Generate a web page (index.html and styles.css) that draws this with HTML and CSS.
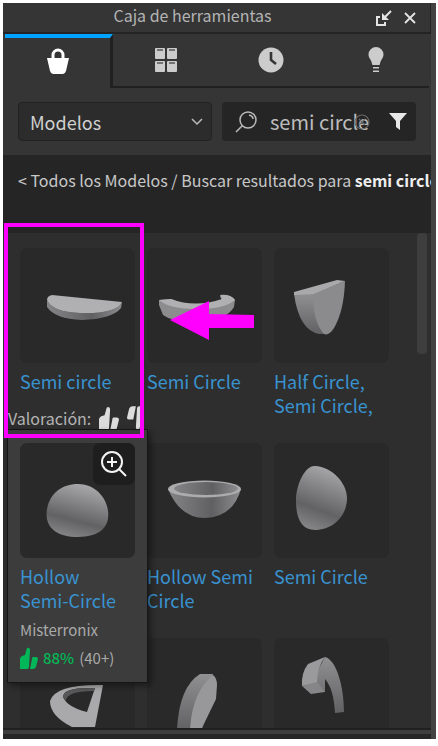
FILE: index.html
```
<!DOCTYPE html>
<html lang="es">
<head>
    <meta charset="UTF-8">
    <meta name="viewport" content="width=device-width, initial-scale=1.0">
    <title>Caja de herramientas</title>
    <link rel="stylesheet" href="styles.css">
</head>
<body>
    <div class="window">
        <div class="panel">
            <header class="titlebar">
                <h1>Caja de herramientas</h1>
                <div class="window-controls">
                    <button class="icon-btn" aria-label="Acoplar">
                        <svg width="16" height="16" viewBox="0 0 16 16" fill="none" stroke="#e4e4e4" stroke-width="2"><path d="M4 7H1v8h8v-3"/><path d="M15 1L8 8" /><path d="M6 3v7h7z" fill="#e4e4e4" stroke="none"/></svg>
                    </button>
                    <button class="icon-btn" aria-label="Cerrar">
                        <svg width="12" height="12" viewBox="0 0 12 12" fill="none" stroke="#e4e4e4" stroke-width="1.8"><path d="M1 1l10 10M11 1L1 11"/></svg>
                    </button>
                </div>
            </header>

            <nav class="tabs">
                <button class="tab active" aria-label="Mercado">
                    <svg width="24" height="26" viewBox="0 0 24 26"><path d="M7 12V7a5 5 0 0 1 10 0v5" fill="none" stroke="#fff" stroke-width="3"/><path d="M1 10h22l-3 13q-1 3-3 3H7q-2 0-3-3z" fill="#fff"/></svg>
                </button>
                <button class="tab" aria-label="Inventario">
                    <svg width="22" height="26" viewBox="0 0 22 26" fill="#ccc"><rect y="1" width="10" height="11" rx="1"/><rect x="12" y="1" width="10" height="11" rx="1"/><rect y="14" width="10" height="11" rx="1"/><rect x="12" y="14" width="10" height="11" rx="1"/><path d="M2 3h6M14 3h6M2 16h6M14 16h6" stroke="#555" stroke-width="1.4"/></svg>
                </button>
                <button class="tab" aria-label="Recientes">
                    <svg width="26" height="26" viewBox="0 0 26 26"><circle cx="13" cy="13" r="12.5" fill="#ccc"/><path d="M13 5v8l5 4" fill="none" stroke="#353535" stroke-width="2.6"/></svg>
                </button>
                <button class="tab" aria-label="Creaciones">
                    <svg width="16" height="26" viewBox="0 0 16 26" fill="#ccc"><path d="M8 0a7.500 7.500 0 0 1 7.500 7.500c0 4-3 5-3.500 9.500q0 1-1 1H5q-1 0-1-1C3.500 12.500.5 11.500.5 7.500A7.500 7.500 0 0 1 8 0z"/><path d="M5 20h6v1.600H5zM5 23.400h6V25H5z"/></svg>
                </button>
            </nav>

            <form class="search-row">
                <div class="select-wrap">
                    <select class="category" aria-label="Categoría">
                        <option>Modelos</option>
                    </select>
                    <svg class="chevron" width="12" height="8" viewBox="0 0 12 8" fill="none" stroke="#bbb" stroke-width="1.5"><path d="M1 1l5 5 5-5"/></svg>
                </div>
                <div class="search-box">
                    <svg width="22" height="22" viewBox="0 0 22 22" fill="none" stroke="#bbb" stroke-width="1.5"><circle cx="13" cy="9" r="8"/><path d="M7.500 14.500L1 21M14 4q4 1 4 4"/></svg>
                    <div class="query-wrap">
                        <input class="query" type="text" value="semi circle" aria-label="Buscar">
                        <button class="clear" type="button" aria-label="Borrar">
                            <svg width="16" height="16" viewBox="0 0 16 16" fill="none" stroke="#6a6a6a" stroke-width="1.2"><circle cx="8" cy="8" r="7"/><path d="M5 5l6 6M11 5l-6 6"/></svg>
                        </button>
                    </div>
                    <button class="icon-btn" type="button" aria-label="Filtrar">
                        <svg width="18" height="17" viewBox="0 0 18 17" fill="#e8e8e8"><path d="M0 0h18l-7 8v9l-4-3V8z"/></svg>
                    </button>
                </div>
            </form>

            <p class="breadcrumb"><a href="#">&lt; Todos los Modelos</a> / Buscar resultados para <strong>semi circle</strong></p>

            <main class="results">
                <svg class="defs" width="0" height="0" aria-hidden="true">
                    <defs>
                        <linearGradient id="shade" x1="0.7" y1="0" x2="0.4" y2="1"><stop offset="0" stop-color="#acacae"/><stop offset="0.7" stop-color="#626264"/><stop offset="1" stop-color="#838385"/></linearGradient>
                        <linearGradient id="side" x1="0" x2="1"><stop offset="0" stop-color="#858587"/><stop offset="0.6" stop-color="#606062"/><stop offset="1" stop-color="#8d8d8f"/></linearGradient>
                        <linearGradient id="drop" x1="0" y1="0" x2="0" y2="1"><stop offset="0" stop-color="#909092"/><stop offset="1" stop-color="#616163"/></linearGradient>
                        <symbol id="thumb" viewBox="0 0 18 22"><path d="M0 22V12q0-2 2-3l3-1 2-7q3-1 3 2L9 20q0 2-2 2z"/><path d="M13 10h3q2 0 2 2l-2 8q-1 2-3 2h-3l2-10q0-2 1-2z"/></symbol>
                    </defs>
                </svg>

                <ul class="grid">
                    <li class="card">
                        <div class="thumbnail"><svg viewBox="0 0 115 115"><path fill="url(#side)" d="M27 52q5 12 33 13 37 1 42-11l-1 6Q92 71 62 72 35 71 27 59z"/><path fill="#b0b0b2" d="M32 47q-5 1-5 5 5 12 33 13 37 1 42-11z"/></svg></div>
                        <a class="name" href="#">Semi circle</a>
                    </li>
                    <li class="card">
                        <div class="thumbnail"><svg viewBox="0 0 115 115"><path fill="#8c8c8e" d="M12 52l12-1q24 11 51 2l-2-5q11-2 15 4l-1 7Q80 72 50 73q-25 1-34-6l-4-10z"/><path fill="#b0b0b2" d="M12 52l12-1q24 9 51 0l-2-4q11-1 15 5-10 9-38 9-28 0-38-9z"/></svg></div>
                        <a class="name" href="#">Semi Circle</a>
                    </li>
                    <li class="card">
                        <div class="thumbnail"><svg viewBox="0 0 115 115"><path fill="url(#drop)" d="M20 46h20q0 26 11 40h-6Q25 82 20 46z"/><path fill="#8b8b8d" d="M39 46l32-13q-1 30-11 47-5 8-10 6-11-12-11-40z"/><path fill="#a9a9ab" d="M20 44l43-12 8 1-31 13-20 1z"/></svg></div>
                        <a class="name" href="#">Half Circle, Semi Circle,</a>
                    </li>
                    <li class="card">
                        <article class="popup">
                            <div class="thumbnail">
                                <svg viewBox="0 0 115 115"><path fill="url(#shade)" d="M27 66c3-16 15-25 31-25s28 12 30 27c2 16-8 26-30 26S24 84 27 66z"/></svg>
                                <button class="preview" aria-label="Ampliar">
                                    <svg width="28" height="28" viewBox="0 0 28 28" fill="none" stroke="#f4f4f4" stroke-width="2"><circle cx="12" cy="12" r="10"/><path d="M12 7v10M7 12h10M19 19l7 7"/></svg>
                                </button>
                            </div>
                            <a class="name" href="#">Hollow Semi-Circle</a>
                            <p class="author">Misterronix</p>
                            <p class="rating"><svg width="18" height="22"><use href="#thumb"/></svg><span class="score">88%</span><span>(40+)</span></p>
                        </article>
                    </li>
                    <li class="card">
                        <div class="thumbnail"><svg viewBox="0 0 115 115"><path fill="url(#side)" d="M21 46q12 29 37 29 28-1 36-29z"/><ellipse cx="57.500" cy="46" rx="36.500" ry="8.500" fill="#acacae"/><ellipse cx="59" cy="45.500" rx="32" ry="6.500" fill="url(#side)"/></svg></div>
                        <a class="name" href="#">Hollow Semi Circle</a>
                    </li>
                    <li class="card">
                        <div class="thumbnail"><svg viewBox="0 0 115 115"><path fill="url(#shade)" d="M41 23c17 1 32 17 32 32 0 19-15 32-32 32-13 0-19-11-19-29s10-36 19-35z"/></svg></div>
                        <a class="name" href="#">Semi Circle</a>
                    </li>
                    <li class="card">
                        <div class="thumbnail"><svg viewBox="0 0 115 115"><path fill="#a9a9ab" fill-rule="evenodd" d="M83 47l-8 42H52Q30 78 30 63q5-17 53-16zm-8 3q-32-1-32 9 4 10 24 15z"/><path fill="#58585a" d="M75 50q-32-1-32 9l3 4q0-10 28-10z"/></svg></div>
                    </li>
                    <li class="card">
                        <div class="thumbnail"><svg viewBox="0 0 115 115"><path fill="url(#drop)" d="M30 92q2-43 23-56h13L55 92z"/><path fill="#98989a" d="M43 92q2-38 23-55 4 3 4 10l-1 14-15 31z"/></svg></div>
                    </li>
                    <li class="card">
                        <div class="thumbnail"><svg viewBox="0 0 115 115"><path fill="url(#drop)" d="M51 19c12 3 19 31 19 55l-9 1c-1-17-4-27-10-34v13h-8V34z"/><path fill="#9a9a9c" d="M28 48q-1-13 6-22l17-7q-8 10-8 26z"/><path fill="#868688" d="M28 48l15-4 8 10-14 2z"/></svg></div>
                    </li>
                </ul>

                <div class="scrollbar"></div>

                <div class="tooltip">
                    <span>Valoración:</span>
                    <svg class="thumb-up" width="20" height="25"><use href="#thumb"/></svg>
                    <svg class="thumb-down" width="20" height="25"><use href="#thumb"/></svg>
                </div>
            </main>

            <!-- marks the first result -->
            <div class="highlight"></div>
            <svg class="arrow" width="84" height="40" viewBox="0 0 84 40"><path fill="#f0f" d="M0 20L39 1v13l45 1v13H39v12z"/></svg>

            <footer class="dock"></footer>
        </div>
    </div>
</body>
</html>
```
FILE: styles.css
```
* {
    margin: 0;
    padding: 0;
    box-sizing: border-box;
}

body {
    font-family: "Noto Sans CJK SC", "Noto Sans", sans-serif;
    background: #fff;
    color: #c8c8c8;
    height: 100vh;
    padding: 3px 2px 7px 3px;
}

button,
input,
select {
    font: inherit;
    color: inherit;
    background: none;
    border: none;
    outline: none;
}

button {
    cursor: pointer;
}

svg {
    display: block;
}

a {
    color: inherit;
    text-decoration: none;
}

.window {
    height: 100%;
    background: #434343;
    padding-right: 5px;
}

.panel {
    position: relative;
    display: flex;
    flex-direction: column;
    height: 100%;
    background: #353535;
}

.titlebar {
    display: flex;
    align-items: center;
    justify-content: center;
    height: 31px;
    padding-bottom: 4px;
    border-bottom: 2px solid #242424;
    border-right: 1px solid #242424;
}

.titlebar h1 {
    flex: 1;
    padding: 0 0 2px 6px;
    font-size: 16px;
    font-weight: normal;
    line-height: 24px;
    text-align: center;
    color: #b4b4b4;
}

.window-controls {
    display: flex;
    align-items: center;
    gap: 12px;
    padding: 4px 14px 0 0;
}

.tabs {
    display: flex;
    height: 54px;
    padding: 0 2px;
}

.tab {
    display: flex;
    flex: 1;
    align-items: center;
    justify-content: center;
    border-bottom: 2px solid #202020;
}

.tab.active {
    border-top: 4px solid #00a2ff;
    border-right: 3px solid #202020;
    border-bottom: none;
    padding-bottom: 4px;
}

.search-row {
    display: grid;
    grid-template-columns: 1fr 1fr;
    gap: 10px;
    padding: 14px 15px;
}

.select-wrap {
    position: relative;
}

.category {
    appearance: none;
    width: 100%;
    height: 39px;
    padding-left: 11px;
    border: 1px solid #222;
    border-radius: 4px;
    background: #2c2c2c;
    font-size: 18px;
    color: #d0d0d0;
}

.chevron {
    position: absolute;
    top: 16px;
    right: 9px;
    pointer-events: none;
}

.search-box {
    display: flex;
    align-items: center;
    gap: 13px;
    min-width: 0;
    height: 39px;
    padding: 0 9px 0 13px;
    border-radius: 4px;
    background: #252525;
}

.search-box > svg,
.icon-btn {
    flex: none;
}

.query-wrap {
    position: relative;
    flex: 1;
    min-width: 0;
}

.query {
    width: 100%;
    height: 37px;
    font-size: 20px;
    color: #bcbcbc;
}

.clear {
    position: absolute;
    top: 11px;
    right: 6px;
}

.breadcrumb {
    height: 78px;
    padding: 13px 0 0 15px;
    overflow: hidden;
    background: #252525;
    font-size: 16px;
    line-height: 24px;
    white-space: nowrap;
}

.breadcrumb strong {
    color: #eee;
}

.results {
    position: relative;
    flex: 1;
    min-height: 0;
    overflow: hidden;
    background: #2e2e2e;
}

.defs {
    position: absolute;
}

.grid {
    display: grid;
    grid-template-columns: repeat(auto-fill, 115px);
    grid-auto-rows: 195px;
    column-gap: 12px;
    padding: 15px 30px 0 17px;
    list-style: none;
}

.card {
    position: relative;
}

.thumbnail {
    position: relative;
    height: 115px;
    margin-bottom: 6px;
    border-radius: 7px;
    background: #292929;
}

.name {
    display: block;
    padding-right: 6px;
    font-size: 18px;
    line-height: 24px;
    color: #3993d0;
}

.popup {
    position: absolute;
    top: -14px;
    left: -13px;
    z-index: 2;
    width: 141px;
    padding: 13px 12px 12px;
    border: 1px solid #161616;
    background: #3c3c3c;
    box-shadow: 3px 3px 6px #0006;
}

.preview {
    position: absolute;
    top: 0;
    right: 0;
    padding: 7px;
    border-radius: 7px;
    background: #1e1e1e;
}

.author {
    padding-top: 6px;
    font-size: 15px;
    line-height: 24px;
    color: #aaa;
}

.rating {
    display: flex;
    align-items: center;
    gap: 5px;
    padding-top: 4px;
    font-size: 15px;
    line-height: 24px;
    color: #aaa;
    fill: #02b757;
}

.score {
    font-weight: 500;
    color: #02b757;
}

.tooltip {
    position: absolute;
    top: 170px;
    left: 5px;
    z-index: 1;
    display: flex;
    align-items: flex-end;
    gap: 8px;
    width: 134px;
    height: 28px;
    overflow: hidden;
    font-size: 16px;
    line-height: 26px;
    color: #b4b4b4;
    fill: #dcdcdc;
}

.tooltip svg {
    flex: none;
}

.thumb-down {
    transform: rotate(180deg);
}

.scrollbar {
    position: absolute;
    top: 0;
    right: 4px;
    width: 10px;
    height: 121px;
    border-radius: 4px;
    background: #3e3e3e;
}

.highlight {
    position: absolute;
    top: 220px;
    left: 1px;
    width: 140px;
    height: 215px;
    border: 4px solid #f0f;
    z-index: 3;
}

.arrow {
    position: absolute;
    top: 297px;
    left: 167px;
    z-index: 3;
}

.dock {
    height: 11px;
    border-top: 2px solid #202020;
    border-bottom: 5px solid #262626;
    background: #3e3e3e;
}
```
